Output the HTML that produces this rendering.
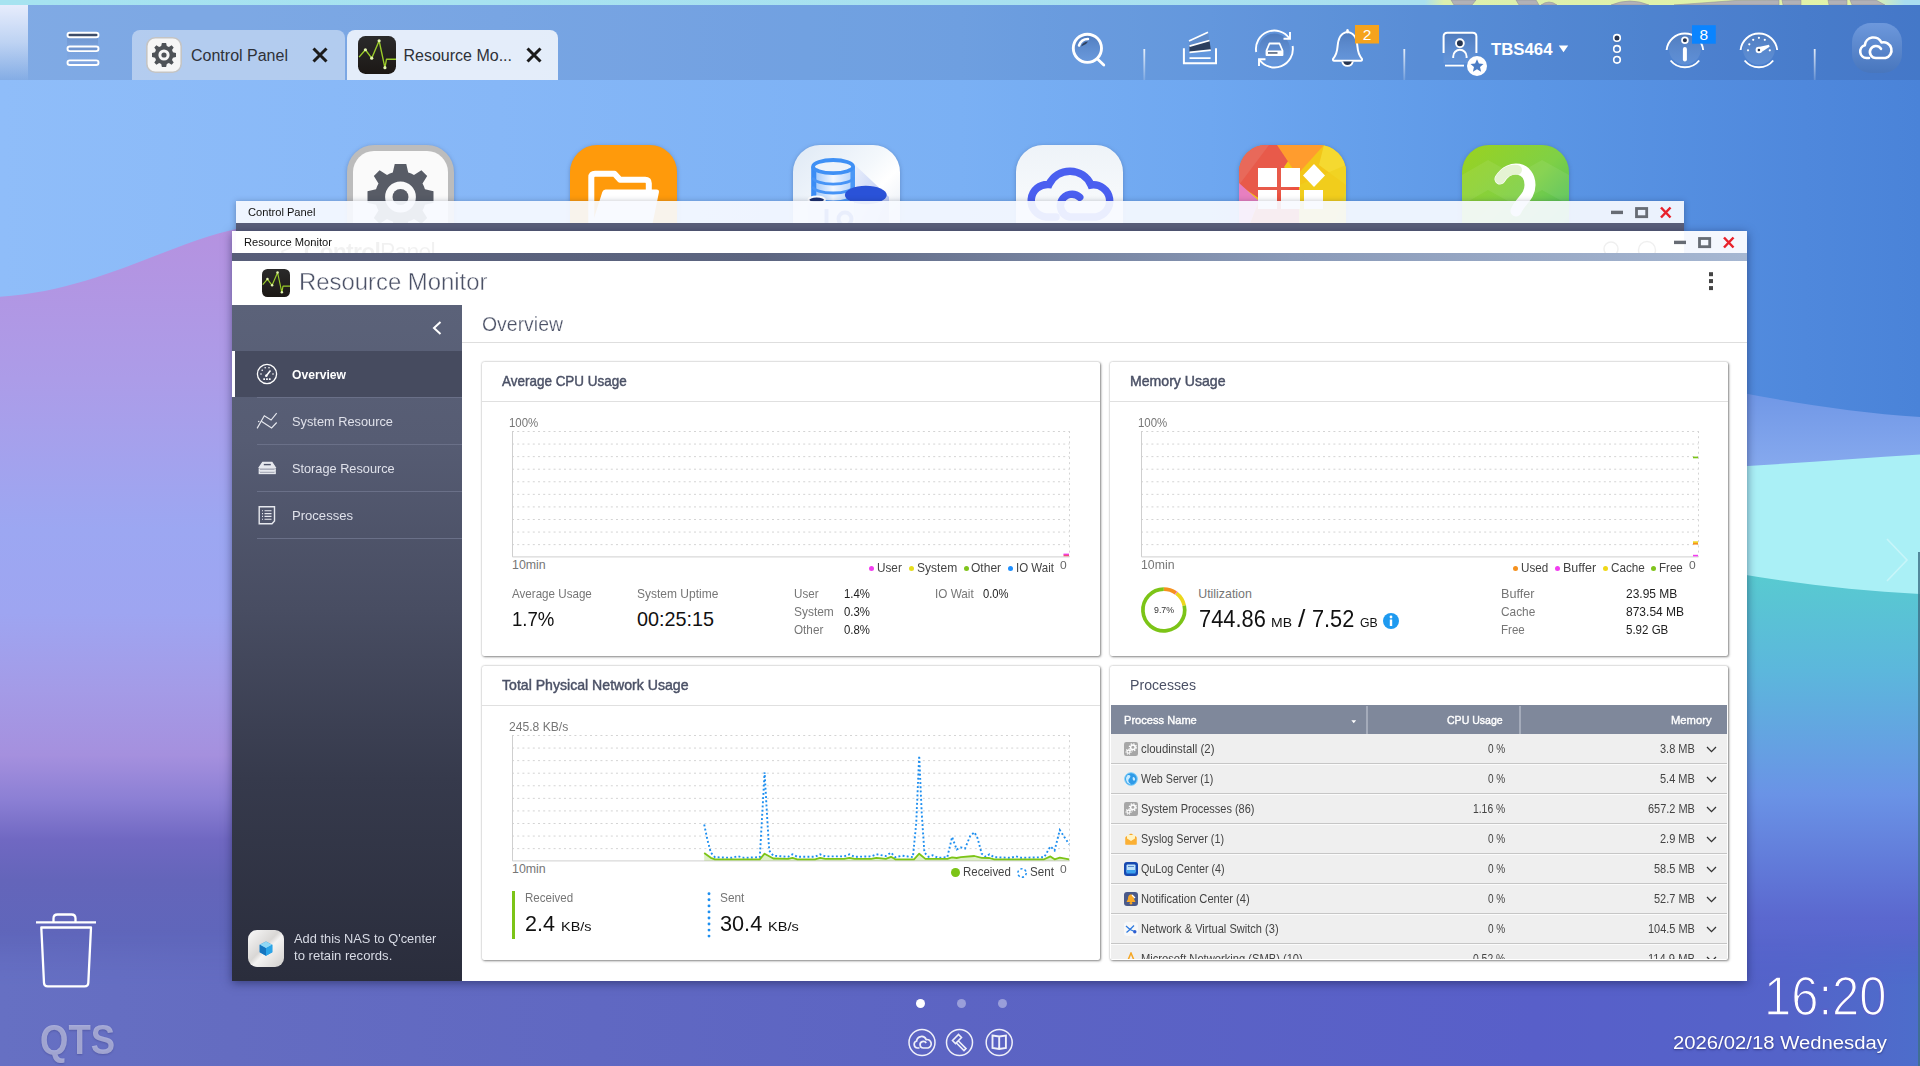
<!DOCTYPE html>
<html lang="en">
<head>
<meta charset="utf-8">
<title>QTS - Resource Monitor</title>
<style>
*{box-sizing:border-box;margin:0;padding:0}
html,body{width:1920px;height:1066px;overflow:hidden}
body{position:relative;font-family:"Liberation Sans",sans-serif;color:#333;background:#6c8fe0}
.abs{position:absolute}
#wall{position:absolute;left:0;top:0;width:1920px;height:1066px}
#topstrip{position:absolute;left:0;top:0;width:1920px;height:5px;background:#a9e1ef;overflow:hidden}
#topbar{position:absolute;left:0;top:5px;width:1920px;height:75px;background:rgba(30,50,90,0.13)}
.tab{position:absolute;top:25px;height:50px;border-radius:8px 8px 0 0}
.tab .ticon{position:absolute}
.tab .tlabel{position:absolute;left:59px;top:17px;font-size:16px;color:#2e3138;white-space:nowrap}
.tab .tclose{position:absolute;top:16px;width:18px;height:18px}
.dicon{position:absolute;top:145px;width:107px;height:107px;filter:drop-shadow(0 1px 2px rgba(40,60,110,0.35))}
.panel{position:absolute;background:#fff;border-radius:2px;border:1px solid transparent;box-shadow:0 0 2px rgba(0,0,0,0.3),1px 1px 2.500px rgba(0,0,0,0.42)}
.phs{position:absolute;left:-1px;right:-1px;height:1px;background:#e0e0e0}
.nav{position:absolute;left:0;width:230px;height:47px}
.navsep{position:absolute;left:25px;width:205px;height:1px;background:#6a7088}
.row{position:absolute;left:0;width:616px;height:30px;background:#efefef;border-bottom:1px solid #c9c9c9}
</style>
</head>
<body>
<svg id="wall" viewBox="0 0 1920 1066" preserveAspectRatio="none">
<defs>
<linearGradient id="gH" x1="0" y1="0" x2="1" y2="0">
<stop offset="0" stop-color="#8fbdf9"/><stop offset="0.26" stop-color="#86b7f7"/><stop offset="0.5" stop-color="#7ab0f4"/><stop offset="0.63" stop-color="#6ea7f0"/><stop offset="0.8" stop-color="#5b96e5"/><stop offset="0.94" stop-color="#4f88dc"/><stop offset="1" stop-color="#4a83d8"/>
</linearGradient>
<linearGradient id="gL" x1="0" y1="0" x2="0" y2="1">
<stop offset="0" stop-color="#b592e0"/><stop offset="0.18" stop-color="#ac9ce8"/><stop offset="0.36" stop-color="#9ca7f2"/><stop offset="0.46" stop-color="#9ea5f1"/><stop offset="0.551" stop-color="#a49be7"/><stop offset="0.629" stop-color="#a590de"/><stop offset="0.683" stop-color="#8b7fd4"/><stop offset="0.730" stop-color="#7068c2"/><stop offset="0.778" stop-color="#6465ba"/><stop offset="0.850" stop-color="#5f66bb"/><stop offset="1" stop-color="#6670c4"/>
</linearGradient>
<linearGradient id="gR" x1="0" y1="0" x2="0" y2="1">
<stop offset="0" stop-color="#58cbd0"/><stop offset="0.2" stop-color="#5cb7dc"/><stop offset="0.45" stop-color="#6a93e6"/><stop offset="0.7" stop-color="#5b68cf"/><stop offset="1" stop-color="#4a5cc4"/>
</linearGradient>
<linearGradient id="gB" x1="0" y1="0" x2="1" y2="0">
<stop offset="0" stop-color="#6670c3"/><stop offset="0.12" stop-color="#646cc1"/><stop offset="0.5" stop-color="#5c64c3"/><stop offset="0.8" stop-color="#585fc9"/><stop offset="0.93" stop-color="#5463c9"/><stop offset="1" stop-color="#4d6dcb"/>
</linearGradient>
<linearGradient id="gM" x1="0" y1="0" x2="0" y2="1"><stop offset="0" stop-color="#000"/><stop offset="0.4" stop-color="#fff"/><stop offset="1" stop-color="#fff"/></linearGradient>
<linearGradient id="gW" x1="0" y1="392" x2="0" y2="466" gradientUnits="userSpaceOnUse"><stop offset="0" stop-color="#7097e6"/><stop offset="1" stop-color="#86a9ee"/></linearGradient>
</defs>
<rect width="1920" height="1066" fill="url(#gH)"/>
<!-- left purple wave -->
<path d="M0,296.800 C97.200,290.300 162.300,245.300 240,228 L900,228 L900,1066 L0,1066 Z" fill="url(#gL)"/>
<!-- right waves -->
<path d="M1740,392.500 C1800,404 1860,413 1920,417 L1920,1066 L1740,1066 Z" fill="url(#gW)"/>
<path d="M1740,466.500 C1800,463 1860,458 1920,454.500 L1920,1066 L1740,1066 Z" fill="#aaf0f6"/>
<path d="M900,572 L1740,574 C1800,584 1860,591 1920,594 L1920,1066 L900,1066 Z" fill="url(#gR)"/>
<mask id="mB"><rect x="0" y="930" width="1920" height="136" fill="url(#gM)"/></mask>
<rect x="0" y="930" width="1920" height="136" fill="url(#gB)" mask="url(#mB)"/>
<rect x="1918" y="552" width="2" height="514" fill="#3d6f86" opacity="0.8"/>
</svg>
<div id="topstrip">
<svg width="1920" height="5" viewBox="0 0 1920 5" style="position:absolute;left:0;top:0">
<defs><linearGradient id="tsg" x1="0" y1="0" x2="1" y2="0"><stop offset="0" stop-color="#a6e3f0"/><stop offset="0.742" stop-color="#a9e0ef"/><stop offset="0.752" stop-color="#dcf0ae"/><stop offset="0.975" stop-color="#e2f3a8"/><stop offset="0.992" stop-color="#a9def0"/></linearGradient></defs>
<rect width="1920" height="5" fill="url(#tsg)"/>
<g fill="#b1b1b7" stroke="#8d8d93" stroke-width="0.500">
<path d="M1451,0 L1476,0 L1472,5 L1454,5 Z"/><path d="M1516,0 L1536,0 L1539,5 L1519,5 Z"/><path d="M1541,5 Q1549,-1 1557,5 Z"/><path d="M1611,5 Q1630,-3 1649,5 Z"/><path d="M1674,5 L1735,0.500 L1779,0 L1779,5 Z"/><path d="M1782,0 L1801,0 L1801,5 L1783,5 Z"/><path d="M1828,0 L1847,0 L1847,5 L1829,5 Z"/><path d="M1850,0 L1876,0 L1885,5 L1852,5 Z"/>
</g>
</svg>
</div>
<div id="topbar">
<div class="abs" style="left:0;top:0;width:28px;height:75px;background:linear-gradient(180deg,rgba(242,244,255,0.900) 0%,rgba(240,244,255,0.550) 50%,rgba(235,240,255,0.040) 100%)"></div>
<!-- hamburger -->
<svg class="abs" style="left:62px;top:21.500px" width="42" height="42" viewBox="0 0 42 42">
<defs><linearGradient id="hbg" x1="0" y1="0" x2="0" y2="1"><stop offset="0" stop-color="#5d7fb8" stop-opacity="0.9"/><stop offset="1" stop-color="#7da2dc" stop-opacity="0.2"/></linearGradient></defs>
<rect x="5" y="7" width="31" height="30" fill="url(#hbg)" opacity="0.55"/>
<rect x="5.500" y="5.700" width="31" height="4.600" rx="2.300" fill="#3d4c68" stroke="#fff" stroke-width="1.900"/>
<rect x="5.500" y="19.500" width="31" height="4.600" rx="2.300" fill="#6f94cf" stroke="#fff" stroke-width="1.900"/>
<rect x="5.500" y="33.400" width="31" height="4.600" rx="2.300" fill="#7ea3de" stroke="#fff" stroke-width="1.900"/>
</svg>
<!-- tab 1 -->
<div class="tab" style="left:132px;width:213px;background:rgba(255,255,255,0.42)">
<svg class="ticon" viewBox="0 0 36 36" style="left:14px;top:7px;width:36px;height:36px;overflow:visible">
<rect x="0.8" y="0.8" width="34.4" height="34.4" rx="8.5" fill="#f6f6f6" stroke="#c4c4c4" stroke-width="1.6"/>
<g transform="translate(18,18)" fill="#4e5257">
<path id="gear1" d="M-2.1,-12 L2.1,-12 L2.8,-8.9 A9.3,9.3 0 0 1 4.9,-8 L7.6,-9.7 L9.7,-7.6 L8,-4.9 A9.3,9.3 0 0 1 8.9,-2.8 L12,-2.1 L12,2.1 L8.9,2.8 A9.3,9.3 0 0 1 8,4.9 L9.7,7.6 L7.6,9.7 L4.9,8 A9.3,9.3 0 0 1 2.8,8.9 L2.1,12 L-2.1,12 L-2.8,8.9 A9.3,9.3 0 0 1 -4.9,8 L-7.6,9.7 L-9.7,7.6 L-8,4.9 A9.3,9.3 0 0 1 -8.9,2.8 L-12,2.1 L-12,-2.1 L-8.9,-2.8 A9.3,9.3 0 0 1 -8,-4.9 L-9.7,-7.6 L-7.6,-9.7 L-4.9,-8 A9.3,9.3 0 0 1 -2.8,-8.9 Z M0,-5.6 A5.6,5.6 0 1 0 0,5.6 A5.6,5.6 0 1 0 0,-5.6 Z" fill-rule="evenodd"/>
<circle r="2.6"/>
</g>
</svg>
<div class="tlabel">Control Panel</div>
<svg class="tclose" style="left:179px" viewBox="0 0 18 18"><path d="M2.5,2.5 L15.5,15.5 M15.5,2.5 L2.5,15.5" stroke="#1b1b1b" stroke-width="3" stroke-linecap="butt" fill="none"/></svg>
</div>
<!-- tab 2 -->
<div class="tab" style="left:347px;width:211px;background:rgba(255,255,255,0.8)">
<svg class="ticon" viewBox="0 0 36 36" style="left:11px;top:6px;width:38px;height:38px">
<defs><linearGradient id="rmg" x1="0" y1="0" x2="0" y2="1"><stop offset="0" stop-color="#2a2a2a"/><stop offset="1" stop-color="#1c1815"/></linearGradient></defs>
<rect x="0" y="0" width="36" height="36" rx="7" fill="url(#rmg)"/>
<path d="M1,20 L7,13 L13,21 L20,4.5 L25.5,30 L27,22 L36,22" fill="none" stroke="#9acb2a" stroke-width="1.3" stroke-linejoin="round"/>
<circle cx="7" cy="13" r="1.5" fill="#e4f5b0"/><circle cx="13" cy="21" r="1.5" fill="#e4f5b0"/><circle cx="20" cy="4.5" r="1.5" fill="#e4f5b0"/><circle cx="25.5" cy="30" r="1.5" fill="#e4f5b0"/>
</svg>
<div class="tlabel" style="left:56.500px">Resource Mo...</div>
<svg class="tclose" style="left:178px" viewBox="0 0 18 18"><path d="M2.5,2.5 L15.5,15.5 M15.5,2.5 L2.5,15.5" stroke="#1b1b1b" stroke-width="3" stroke-linecap="butt" fill="none"/></svg>
</div>
<svg class="abs" style="left:1040px;top:0" width="880" height="75" viewBox="1040 5 880 75">
<defs>
<linearGradient id="sepg" x1="0" y1="0" x2="0" y2="1"><stop offset="0" stop-color="#fff" stop-opacity="0.85"/><stop offset="1" stop-color="#fff" stop-opacity="0.15"/></linearGradient>
<linearGradient id="dk" x1="0" y1="0" x2="0" y2="1"><stop offset="0" stop-color="#4f7bbd"/><stop offset="1" stop-color="#6a98da" stop-opacity="0.6"/></linearGradient>
<linearGradient id="cbg" x1="0" y1="0" x2="0" y2="1"><stop offset="0" stop-color="#6d98dc"/><stop offset="1" stop-color="#4876bd"/></linearGradient>
</defs>
<!-- search -->
<circle cx="1087.4" cy="48.3" r="14.1" fill="url(#dk)" stroke="#fff" stroke-width="2.9"/>
<path d="M1079,45.500 A9.500,9.500 0 0 1 1088,39" fill="none" stroke="#fff" stroke-width="2.500" stroke-linecap="round"/>
<path d="M1081,46.5 A8,8 0 0 1 1088,41.5 L1086,44 Z" fill="#2f415f"/>
<path d="M1097.5,59 L1103.8,65" stroke="#fff" stroke-width="2.8" stroke-linecap="round"/>
<!-- sep -->
<rect x="1143.4" y="49" width="1.8" height="31" fill="url(#sepg)"/>
<rect x="1403.4" y="49" width="1.8" height="31" fill="url(#sepg)"/>
<rect x="1813.8" y="49" width="1.8" height="31" fill="url(#sepg)"/>
<!-- tray -->
<path d="M1189,41 L1208,32.3 L1210.8,50.5 L1189.5,52.5 Z" fill="#5f8ccb"/>
<path d="M1189.5,46.2 L1209.5,40.5 L1210.8,50 L1189.5,52 Z" fill="#2c3f5e"/>
<path d="M1189,41 L1208,32.3 M1189.5,46.2 L1209.5,40.5 M1189.5,52.3 L1210.8,50.2 M1189.5,58.2 L1210.6,58.2" stroke="#fff" stroke-width="1.8" fill="none"/>
<path d="M1183.9,48.3 L1183.9,63.2 L1216,63.2 L1216,48.3" stroke="#fff" stroke-width="2" fill="none"/>
<!-- sync -->
<circle cx="1274.4" cy="48.9" r="15.5" fill="url(#dk)"/>
<path d="M1256.2,52 A18.4,18.4 0 0 1 1289.5,38.5" fill="none" stroke="#fff" stroke-width="1.9"/>
<path d="M1283.5,38.8 L1290,38.8 L1290,32" fill="none" stroke="#fff" stroke-width="1.9"/>
<path d="M1292.6,46 A18.4,18.4 0 0 1 1259.3,59.5" fill="none" stroke="#fff" stroke-width="1.9"/>
<path d="M1265.5,59.2 L1259,59.2 L1259,66" fill="none" stroke="#fff" stroke-width="1.9"/>
<path d="M1269.5,43.5 L1279.5,43.5 L1282.5,50.5 L1282.5,55 L1266.5,55 L1266.5,50.5 Z" fill="none" stroke="#fff" stroke-width="1.8" stroke-linejoin="round"/>
<rect x="1266.5" y="50.5" width="16" height="4.5" fill="#fff"/>
<rect x="1268" y="52.3" width="9.5" height="1.3" fill="#2c3f5e"/>
<!-- bell -->
<path d="M1347.5,32 C1339.5,33 1338,40 1337.5,47 C1337,54 1334.5,57 1333.2,58.6 C1332.6,59.6 1333,60.8 1334.2,60.8 L1360.8,60.8 C1362,60.8 1362.4,59.6 1361.8,58.6 C1360.5,57 1358,54 1357.5,47 C1357,40 1355.500,33 1347.5,32 Z" fill="url(#dk)" stroke="#fff" stroke-width="2" stroke-linejoin="round"/>
<path d="M1342.2,61.5 A5.4,5.4 0 0 0 1352.800,61.5" fill="#26344f" stroke="#fff" stroke-width="1.8"/>
<path d="M1347.5,30.3 L1347.5,32" stroke="#fff" stroke-width="2.4" stroke-linecap="round"/>
<rect x="1355" y="25" width="24" height="18.5" fill="#f5a31d"/>
<text x="1367" y="39.6" font-family="Liberation Sans, sans-serif" font-size="15.500" fill="#fff" text-anchor="middle">2</text>
<!-- user -->
<rect x="1443.5" y="33" width="33" height="30" fill="url(#dk)"/>
<path d="M1443.6,53 L1443.6,36.5 Q1443.6,32.700 1447.4,32.700 L1472.6,32.700 Q1476.4,32.700 1476.4,36.500 L1476.4,53" fill="none" stroke="#fff" stroke-width="2"/>
<path d="M1445,65.600 L1464,65.600" stroke="#fff" stroke-width="1.8"/>
<circle cx="1459.900" cy="43.2" r="3.9" fill="#26344f" stroke="#fff" stroke-width="1.9"/>
<path d="M1453.2,58 L1453.2,56.5 A6.7,6.7 0 0 1 1466.600,56.500 L1466.600,58" fill="none" stroke="#fff" stroke-width="1.9"/>
<circle cx="1477" cy="66" r="10" fill="#fff"/>
<path d="M1477,59.300 L1478.900,63.600 L1483.500,64 L1480,67.100 L1481.100,71.700 L1477,69.300 L1472.900,71.700 L1474,67.100 L1470.500,64 L1475.100,63.600 Z" fill="#4b7cc4"/>
<text x="1491" y="54.800" font-family="Liberation Sans, sans-serif" font-weight="bold" font-size="17.3" fill="#fff" textLength="61.500" lengthAdjust="spacingAndGlyphs">TBS464</text>
<path d="M1558.800,45.500 L1568.200,45.500 L1563.500,52.200 Z" fill="#fff"/>
<!-- dots -->
<rect x="1613.500" y="36" width="7" height="26" fill="#4b77b8" opacity="0.5"/>
<circle cx="1617" cy="37.900" r="3.300" fill="#26344f" stroke="#fff" stroke-width="1.600"/>
<circle cx="1617" cy="48.900" r="3.300" fill="none" stroke="#fff" stroke-width="1.600"/>
<circle cx="1617" cy="59.800" r="3.300" fill="none" stroke="#fff" stroke-width="1.600"/>
<!-- info -->
<circle cx="1684.900" cy="48.800" r="16" fill="url(#dk)"/>
<path d="M1666.600,50 A18.400,18.400 0 0 1 1703.200,50" fill="none" stroke="#fff" stroke-width="1.900"/>
<path d="M1670.600,60.500 A18.400,18.400 0 0 0 1699.200,60.500" fill="none" stroke="#fff" stroke-width="1.900"/>
<circle cx="1684.900" cy="40.200" r="2.900" fill="#26344f" stroke="#fff" stroke-width="1.700"/>
<path d="M1684.900,49 L1684.900,59.500" stroke="#fff" stroke-width="4" stroke-linecap="round"/>
<rect x="1692" y="25.200" width="23.800" height="18.500" fill="#0a84ff"/>
<text x="1703.900" y="39.800" font-family="Liberation Sans, sans-serif" font-size="15.500" fill="#fff" text-anchor="middle">8</text>
<!-- gauge -->
<circle cx="1758.900" cy="48.800" r="16" fill="url(#dk)"/>
<path d="M1740.600,50 A18.400,18.400 0 0 1 1777.200,50" fill="none" stroke="#fff" stroke-width="1.900"/>
<path d="M1744.600,60.500 A18.400,18.400 0 0 0 1773.200,60.500" fill="none" stroke="#fff" stroke-width="1.900"/>
<g fill="#fff"><circle cx="1748" cy="50.300" r="1.100"/><circle cx="1749.300" cy="44.300" r="1.100"/><circle cx="1753.200" cy="39.800" r="1.100"/><circle cx="1758.900" cy="37.800" r="1.100"/><circle cx="1764.800" cy="39.800" r="1.100"/><circle cx="1769.800" cy="50.300" r="1.100"/></g>
<path d="M1756.500,47.500 L1769,44.800 L1769.600,46.800 L1760,53 Z" fill="#fff"/>
<circle cx="1758.900" cy="50" r="3.300" fill="#fff"/><circle cx="1758.900" cy="50" r="1.300" fill="#26344f"/>
<!-- cloud btn -->
<rect x="1852" y="23" width="50" height="50" rx="19" fill="url(#cbg)"/>
<g fill="none" stroke="#fff" stroke-width="2.600" stroke-linecap="round" stroke-linejoin="round">
<path d="M1869,58 L1866.500,58 A6.500,6.500 0 0 1 1864.800,45.300 A8.800,8.800 0 0 1 1881.500,42.500 A7.800,7.800 0 0 1 1885.500,58 L1876,58 A6,6 0 1 1 1881,48.800"/>
</g>
</svg>

</div>
<div id="desk">
<!-- control panel -->
<svg class="dicon" style="left:347px" viewBox="0 0 107 107">
<rect width="107" height="107" rx="27" fill="#bcbcbc"/>
<rect x="6" y="6" width="95" height="95" rx="21" fill="#fafafa"/>
<g transform="translate(53.5,52) scale(2.75)" fill="#585c66"><use href="#gear1"/><circle r="2.9"/></g>
</svg>
<!-- file station -->
<svg class="dicon" style="left:570px" viewBox="0 0 107 107">
<rect width="107" height="107" rx="27" fill="#ff9a0b"/>
<path d="M21.300,86 L21.300,32.500 Q21.300,28.800 25,28.800 L44.500,28.800 L50,34.700 L75.200,34.700 Q78.800,34.700 78.800,38.300 L78.800,46" fill="none" stroke="#fff" stroke-width="6" stroke-linejoin="round"/>
<path d="M35.500,44.400 L86.500,44.400 Q89.500,44.400 88.900,47.400 L81,86 L20,86 L32.300,47 Q33.100,44.400 35.500,44.400 Z" fill="#fff"/>
</svg>
<!-- storage -->
<svg class="dicon" style="left:793px" viewBox="0 0 107 107">
<defs><linearGradient id="stg" x1="0" y1="0" x2="1" y2="1"><stop offset="0" stop-color="#dfe9f5"/><stop offset="0.450" stop-color="#f4f8fc"/><stop offset="0.600" stop-color="#ffffff"/><stop offset="1" stop-color="#dbe4f1"/></linearGradient>
<linearGradient id="stc" x1="0" y1="0" x2="1" y2="0"><stop offset="0" stop-color="#3a8cf5"/><stop offset="0.100" stop-color="#3a8cf5"/><stop offset="0.130" stop-color="#a9cdfb"/><stop offset="0.500" stop-color="#f2f7ff"/><stop offset="0.880" stop-color="#bcd8fc"/><stop offset="0.910" stop-color="#4a97f6"/><stop offset="1" stop-color="#4a97f6"/></linearGradient>
<linearGradient id="stw" x1="0" y1="0" x2="1" y2="1"><stop offset="0" stop-color="#e6ecfb"/><stop offset="0.600" stop-color="#b9c8f3"/><stop offset="1" stop-color="#9fb2ee"/></linearGradient></defs>
<rect width="107" height="107" rx="27" fill="url(#stg)"/>
<path d="M62,20 L96,52 L96,107 L62,107 Z" fill="url(#stw)" opacity="0.850"/>
<rect x="18.200" y="21.600" width="43.800" height="50" fill="url(#stc)"/>
<ellipse cx="40.100" cy="21.600" rx="20" ry="6.600" fill="#eef3fa" stroke="#3f90f5" stroke-width="3.800"/>
<path d="M20,32.500 A20,6.600 0 0 0 60.200,32.500 M20,41.400 A20,6.600 0 0 0 60.200,41.400 M20,50.200 A20,6.600 0 0 0 60.200,50.200" fill="none" stroke="#4794f6" stroke-width="2.900"/>
<ellipse cx="72.800" cy="50" rx="20.900" ry="9.200" fill="#2a52d8"/>
<rect x="14.800" y="56" width="47" height="51" rx="4" fill="#e6ecf6"/>
<ellipse cx="23.700" cy="54.800" rx="8.300" ry="3.200" fill="#1c2f6e" stroke="#fff" stroke-width="2"/>
<rect x="31.500" y="64" width="4" height="20" fill="#3a62d8"/><circle cx="52" cy="74" r="6.500" fill="none" stroke="#3a62d8" stroke-width="4"/>
</svg>
<!-- myqnapcloud -->
<svg class="dicon" style="left:1016px" viewBox="0 0 107 107">
<defs><linearGradient id="mcg" x1="0" y1="0" x2="0" y2="1"><stop offset="0" stop-color="#eef3f8"/><stop offset="1" stop-color="#ffffff"/></linearGradient></defs>
<rect width="107" height="107" rx="27" fill="url(#mcg)"/>
<path d="M63.700,52.200 A11.500,11.500 0 1 0 53.700,72 L80,72 A15.500,15.500 0 0 0 75,40 A23,23 0 0 0 33,39.500 A16,16 0 0 0 30,72 L40,72" fill="none" stroke="#4a5ff0" stroke-width="7.500" stroke-linecap="round"/>
</svg>
<!-- app center -->
<svg class="dicon" style="left:1239px" viewBox="0 0 107 107">
<defs><clipPath id="acc"><rect width="107" height="107" rx="27"/></clipPath></defs>
<g clip-path="url(#acc)">
<rect width="107" height="107" fill="#f3c618"/>
<path d="M0,0 L60,0 L45,22 L60,40 L30,60 L0,40 Z" fill="#e85a4a"/>
<path d="M0,0 L30,0 L0,40 Z" fill="#e8695a"/>
<path d="M45,0 L85,0 L58,30 L38,0 Z" fill="#ff9c2e"/>
<path d="M85,0 L107,0 L107,40 L80,20 Z" fill="#f5d930"/>
<path d="M0,38 L20,56 L0,107 Z" fill="#e77fc0"/>
<path d="M107,45 L107,107 L85,107 Z" fill="#c8d84a"/>
<path d="M20,56 L60,40 L60,107 L0,107 Z" fill="#ec5240"/>
<path d="M60,40 L107,20 L107,107 L60,107 Z" fill="#f0d01e" opacity="0.7"/>
<rect x="19" y="23" width="19" height="19" fill="#fff"/><rect x="42" y="23" width="19" height="19" fill="#fff"/>
<rect x="19" y="45" width="19" height="19" fill="#fff"/><rect x="42" y="45" width="19" height="19" fill="#fff"/><rect x="65" y="45" width="19" height="19" fill="#fff"/>
<path d="M75,19 L86,30.500 L75,42 L64,30.500 Z" fill="#fff"/>
</g>
</svg>
<!-- help -->
<svg class="dicon" style="left:1462px" viewBox="0 0 107 107">
<defs><linearGradient id="hpg" x1="0" y1="0" x2="1" y2="1"><stop offset="0" stop-color="#9bd21f"/><stop offset="0.5" stop-color="#7fd046"/><stop offset="1" stop-color="#35b765"/></linearGradient></defs>
<rect width="107" height="107" rx="27" fill="url(#hpg)"/>
<path d="M0,30 L26,15 L53,30 L80,15 L107,30 L107,60 L80,45 L53,60 L26,45 L0,60 Z" fill="#fff" opacity="0.070"/>
<path d="M38,34 C48,18 68,22 68,40 C68,52 58,56 54,66" fill="none" stroke="#fff" stroke-width="11" stroke-linecap="round"/>
<path d="M38,34 C42,27 49,24 55,25" fill="none" stroke="#dff0c8" stroke-width="10" stroke-linecap="round" opacity="0.800"/>
</svg>
</div>
<div id="cpwin" class="abs" style="left:236px;top:201px;width:1448px;height:30px;box-shadow:0 1px 6px rgba(20,30,60,0.35)">
<div class="abs" style="left:0;top:0;width:1448px;height:22px;background:rgba(247,250,255,0.925)"></div>
<div class="abs" style="left:0;top:22px;width:1448px;height:8px;background:#595e79"></div>
<div class="abs" style="left:0;top:30px;width:1448px;height:300px;background:#fff"></div>
<div style="position:absolute;top:6.00px;font-size:11.40px;line-height:11.40px;color:#111;white-space:nowrap;left:11.60px;transform:scaleX(0.9764);transform-origin:0 0;">Control Panel</div>
<svg class="abs" style="left:1370px;top:0" width="78" height="22" viewBox="0 0 78 22">
<rect x="5" y="9.700" width="12" height="3.400" fill="#676c74"/>
<rect x="30.500" y="7.500" width="10.200" height="8.200" fill="none" stroke="#676c74" stroke-width="2.800"/>
<path d="M55,6.500 L64.500,16.500 M64.500,6.500 L55,16.500" stroke="#e8212b" stroke-width="2.500" fill="none"/>
</svg>
</div>
<div id="rmwin" class="abs" style="left:232px;top:231px;width:1515px;height:750px;box-shadow:0 2px 9px rgba(15,20,60,0.5)">
<div class="abs" style="left:0;top:0;width:1515px;height:22px;background:rgba(255,255,255,0.965)"></div>
<div class="abs" style="left:1452px;top:0;width:63px;height:22px;background:rgba(240,245,253,0.6)"></div>
<div class="abs" style="left:0;top:0;width:1515px;height:22px;overflow:hidden"><div class="abs" style="left:48px;top:9px;font-size:23px;line-height:24px;color:#000;opacity:0.050;white-space:nowrap;letter-spacing:-0.800px">&lt; &nbsp;<b>Control</b>Panel</div><svg class="abs" style="left:1368px;top:8px;opacity:0.06" width="60" height="16" viewBox="0 0 60 16"><circle cx="11" cy="10" r="7" fill="none" stroke="#000" stroke-width="1.500"/><circle cx="47" cy="11" r="8.500" fill="none" stroke="#000" stroke-width="1.500"/></svg></div>
<div style="position:absolute;top:6.00px;font-size:11.40px;line-height:11.40px;color:#111;white-space:nowrap;left:11.70px;transform:scaleX(0.9788);transform-origin:0 0;">Resource Monitor</div>
<svg class="abs" style="left:1437px;top:0" width="78" height="22" viewBox="0 0 78 22">
<rect x="5" y="9.700" width="12" height="3.400" fill="#676c74"/>
<rect x="30.500" y="7.500" width="10.200" height="8.200" fill="none" stroke="#676c74" stroke-width="2.800"/>
<path d="M55,6.500 L64.500,16.500 M64.500,6.500 L55,16.500" stroke="#e8212b" stroke-width="2.500" fill="none"/>
</svg>
<div class="abs" style="left:0;top:22px;width:1515px;height:8px;background:linear-gradient(90deg,#575d78 0%,#5c6580 35%,#8a9ab8 70%,#a6b7d2 100%)"></div>
<div class="abs" style="left:0;top:30px;width:1515px;height:44px;background:#fff"></div>
<svg class="abs" style="left:30px;top:38px" width="28" height="28" viewBox="0 0 36 36">
<rect width="36" height="36" rx="7" fill="url(#rmg)"/>
<path d="M1,20 L7,13 L13,21 L20,4.500 L25.500,30 L27,22 L36,22" fill="none" stroke="#9acb2a" stroke-width="1.500" stroke-linejoin="round"/>
<circle cx="7" cy="13" r="1.600" fill="#e4f5b0"/><circle cx="13" cy="21" r="1.600" fill="#e4f5b0"/><circle cx="20" cy="4.500" r="1.600" fill="#e4f5b0"/><circle cx="25.500" cy="30" r="1.600" fill="#e4f5b0"/>
</svg>
<div style="position:absolute;top:40.00px;font-size:23.50px;line-height:23.50px;color:#4b5166;white-space:nowrap;left:66.90px;transform:scaleX(1.0163);transform-origin:0 0;-webkit-text-stroke:0.400px #fff;">Resource Monitor</div>
<svg class="abs" style="left:1476px;top:40px" width="6" height="20" viewBox="0 0 6 20"><rect x="1" y="1.200" width="4" height="4" fill="#444"/><rect x="1" y="8.100" width="4" height="4" fill="#444"/><rect x="1" y="15.100" width="4" height="4" fill="#444"/></svg>
<div class="abs" style="left:0;top:74px;width:230px;height:676px;background:linear-gradient(180deg,#5b6279 0%,#565c73 20%,#484d62 45%,#363a4c 70%,#2a2d3c 100%)">
<svg class="abs" style="left:199px;top:15px" width="12" height="16" viewBox="0 0 12 16"><path d="M9.500,2 L3,8 L9.500,14" fill="none" stroke="#fff" stroke-width="2"/></svg>
<div class="nav" style="top:46px;height:46px;background:#464b5f"></div><div class="abs" style="left:0;top:46px;width:3px;height:46px;background:#fff"></div>
<div class="navsep" style="top:92.0px"></div>
<div class="navsep" style="top:139.0px"></div>
<div class="navsep" style="top:186.0px"></div>
<div class="navsep" style="top:233.0px"></div>
<svg class="abs" style="left:24px;top:58px" width="22" height="22" viewBox="0 0 22 22" fill="none" stroke="#fff" stroke-width="1.300">
<circle cx="11" cy="11" r="9.600"/><path d="M10.500,12.500 L14.500,7.500" stroke-width="1.600"/><circle cx="10.300" cy="12.800" r="1.300" fill="#fff" stroke="none"/>
<g stroke="none" fill="#fff"><rect x="7.300" y="15.300" width="1.700" height="1.700"/><rect x="10.100" y="15.300" width="1.700" height="1.700"/><rect x="12.900" y="15.300" width="1.700" height="1.700"/>
<circle cx="5" cy="11" r="0.800"/><circle cx="6.200" cy="7.200" r="0.800"/><circle cx="9.200" cy="4.800" r="0.800"/><circle cx="13" cy="4.800" r="0.800"/><circle cx="17" cy="11" r="0.800"/></g></svg>
<svg class="abs" style="left:24px;top:105px" width="22" height="22" viewBox="0 0 22 22" fill="none" stroke="#e6e8ee" stroke-width="1.150">
<path d="M1.100,18.400 L8.300,5.800 L15.100,10 L20.700,3.200"/><path d="M5.300,11.200 L15.600,17.900 L20.700,12.500"/><circle cx="2.700" cy="11.500" r="0.800" fill="#e6e8ee" stroke="none"/></svg>
<svg class="abs" style="left:24px;top:152px" width="22" height="22" viewBox="0 0 22 22" fill="none" stroke="#e6e8ee" stroke-width="1.300">
<path d="M6.700,5.300 L15.900,5.300 L19.200,10.300 L3.300,10.300 Z" fill="#e6e8ee"/><rect x="7.800" y="6.900" width="7" height="1.400" fill="#4f556b" stroke="none"/>
<rect x="3.300" y="11.900" width="15.900" height="1.700" fill="none"/><rect x="3.300" y="14.800" width="15.900" height="1.700" fill="none"/></svg>
<svg class="abs" style="left:24px;top:199px" width="22" height="22" viewBox="0 0 22 22" fill="none" stroke="#e6e8ee" stroke-width="1.400">
<path d="M3.200,2.700 L18.500,2.700 L18.500,17 L16,19.700 L3.200,19.700 Z"/><g stroke-width="1.100"><path d="M8.500,6.800 L15.500,6.800 M8.500,9.600 L15.500,9.600 M8.500,12.400 L15.500,12.400 M8.500,15.200 L15.500,15.200"/><path d="M6,6.800 L7,6.800 M6,9.600 L7,9.600 M6,12.400 L7,12.400 M6,15.200 L7,15.200"/></g></svg>
<div style="position:absolute;top:63.00px;font-size:13.40px;line-height:13.40px;color:#fff;white-space:nowrap;font-weight:bold;left:59.50px;transform:scaleX(0.9066);transform-origin:0 0;">Overview</div>
<div style="position:absolute;top:110.00px;font-size:13.40px;line-height:13.40px;color:#dfe1ea;white-space:nowrap;left:59.50px;transform:scaleX(0.9556);transform-origin:0 0;">System Resource</div>
<div style="position:absolute;top:157.00px;font-size:13.40px;line-height:13.40px;color:#dfe1ea;white-space:nowrap;left:59.50px;transform:scaleX(0.9515);transform-origin:0 0;">Storage Resource</div>
<div style="position:absolute;top:204.00px;font-size:13.40px;line-height:13.40px;color:#dfe1ea;white-space:nowrap;left:59.50px;transform:scaleX(0.9758);transform-origin:0 0;">Processes</div>
<svg class="abs" style="left:16px;top:624.500px" width="36" height="37" viewBox="0 0 36 37">
<defs><linearGradient id="qcg" x1="0" y1="0" x2="1" y2="1"><stop offset="0" stop-color="#fafafa"/><stop offset="0.450" stop-color="#d9d7d5"/><stop offset="0.550" stop-color="#f4f3f2"/><stop offset="1" stop-color="#d0cecc"/></linearGradient></defs>
<rect width="36" height="37" rx="9" fill="url(#qcg)"/>
<path d="M18,11.500 L24.300,14.800 L24.300,22.300 L18,25.800 L11.700,22.300 L11.700,14.800 Z" fill="#1f8fd8"/>
<path d="M18,11.500 L24.300,14.800 L18,18.200 L11.700,14.800 Z" fill="#8fd8f5"/><path d="M18,18.200 L24.300,14.800 L24.300,22.300 L18,25.800 Z" fill="#2aa5e8"/><path d="M18,18.200 L11.700,14.800 L11.700,22.300 L18,25.800 Z" fill="#1576c0"/></svg>
<div style="position:absolute;top:628.00px;font-size:12.60px;line-height:12.60px;color:#d8dbe5;white-space:nowrap;left:61.60px;transform:scaleX(1.0200);transform-origin:0 0;">Add this NAS to Q'center</div>
<div style="position:absolute;top:645.00px;font-size:12.60px;line-height:12.60px;color:#d8dbe5;white-space:nowrap;left:61.60px;transform:scaleX(1.0402);transform-origin:0 0;">to retain records.</div>
</div>
<div class="abs" style="left:230px;top:74px;width:1285px;height:676px;background:#fff"></div>
<div style="position:absolute;top:84.00px;font-size:19.80px;line-height:19.80px;color:#4b5166;white-space:nowrap;left:249.80px;transform:scaleX(0.9824);transform-origin:0 0;-webkit-text-stroke:0.250px #fff;">Overview</div>
<div class="abs" style="left:230px;top:111px;width:1285px;height:1px;background:#dedede"></div>
<div class="panel" style="left:250px;top:131px;width:618px;height:294px;"><div class="phs" style="top:38px"></div></div>
<div style="position:absolute;top:143.00px;font-size:14.30px;line-height:14.30px;color:#4b5166;white-space:nowrap;left:270.00px;transform:scaleX(0.9415);transform-origin:0 0;-webkit-text-stroke:0.450px #4b5166;">Average CPU Usage</div>
<div style="position:absolute;top:186.00px;font-size:12.40px;line-height:12.40px;color:#767676;white-space:nowrap;left:277.00px;transform:scaleX(0.9242);transform-origin:0 0;">100%</div>
<svg class="abs" style="left:276.0px;top:196.0px;overflow:visible" width="570" height="140" viewBox="0 0 570 140"><g transform="translate(4,4)"><path d="M0,0.50 L557.5,0.50" stroke="#d4d4d4" stroke-width="1" stroke-dasharray="2,3.200" fill="none"/><path d="M0,13.07 L557.5,13.07" stroke="#d4d4d4" stroke-width="1" stroke-dasharray="2,3.200" fill="none"/><path d="M0,25.64 L557.5,25.64" stroke="#d4d4d4" stroke-width="1" stroke-dasharray="2,3.200" fill="none"/><path d="M0,38.21 L557.5,38.21" stroke="#d4d4d4" stroke-width="1" stroke-dasharray="2,3.200" fill="none"/><path d="M0,50.78 L557.5,50.78" stroke="#d4d4d4" stroke-width="1" stroke-dasharray="2,3.200" fill="none"/><path d="M0,63.35 L557.5,63.35" stroke="#d4d4d4" stroke-width="1" stroke-dasharray="2,3.200" fill="none"/><path d="M0,75.92 L557.5,75.92" stroke="#d4d4d4" stroke-width="1" stroke-dasharray="2,3.200" fill="none"/><path d="M0,88.49 L557.5,88.49" stroke="#d4d4d4" stroke-width="1" stroke-dasharray="2,3.200" fill="none"/><path d="M0,101.06 L557.5,101.06" stroke="#d4d4d4" stroke-width="1" stroke-dasharray="2,3.200" fill="none"/><path d="M0,113.63 L557.5,113.63" stroke="#d4d4d4" stroke-width="1" stroke-dasharray="2,3.200" fill="none"/><path d="M557.5,0 L557.5,125.7" stroke="#d4d4d4" stroke-width="1" stroke-dasharray="2,3.200" fill="none"/><path d="M0.500,0 L0.500,125.9 L557.5,125.9" stroke="#cfcfcf" stroke-width="1" fill="none"/><rect x="551.500" y="122.600" width="5.500" height="1.400" fill="#f23df0"/><rect x="551.500" y="123.800" width="5.500" height="1.500" fill="#f0507a"/></g></svg>
<div style="position:absolute;top:328.00px;font-size:12.40px;line-height:12.40px;color:#767676;white-space:nowrap;left:280.00px;">10min</div>
<div class="abs" style="left:636.7px;top:334.7px;width:5.2px;height:5.2px;border-radius:50%;background:#f23df0"></div>
<div style="position:absolute;top:331.00px;font-size:12.40px;line-height:12.40px;color:#444;white-space:nowrap;left:645.00px;transform:scaleX(0.9476);transform-origin:0 0;">User</div>
<div class="abs" style="left:676.7px;top:334.7px;width:5.2px;height:5.2px;border-radius:50%;background:#e6de1e"></div>
<div style="position:absolute;top:331.00px;font-size:12.40px;line-height:12.40px;color:#444;white-space:nowrap;left:684.50px;transform:scaleX(0.9731);transform-origin:0 0;">System</div>
<div class="abs" style="left:731.7px;top:334.7px;width:5.2px;height:5.2px;border-radius:50%;background:#80c41c"></div>
<div style="position:absolute;top:331.00px;font-size:12.40px;line-height:12.40px;color:#444;white-space:nowrap;left:739.20px;transform:scaleX(0.9710);transform-origin:0 0;">Other</div>
<div class="abs" style="left:775.7px;top:334.7px;width:5.2px;height:5.2px;border-radius:50%;background:#1e8fff"></div>
<div style="position:absolute;top:331.00px;font-size:12.40px;line-height:12.40px;color:#444;white-space:nowrap;left:783.80px;transform:scaleX(0.9300);transform-origin:0 0;">IO Wait</div>
<div style="position:absolute;top:329.00px;font-size:11.00px;line-height:11.00px;color:#666;white-space:nowrap;left:828.00px;transform:scaleX(1.0939);transform-origin:0 0;">0</div>
<div style="position:absolute;top:357.00px;font-size:12.40px;line-height:12.40px;color:#767676;white-space:nowrap;left:280.00px;transform:scaleX(0.9368);transform-origin:0 0;">Average Usage</div>
<div style="position:absolute;top:379.00px;font-size:19.80px;line-height:19.80px;color:#111;white-space:nowrap;left:280.30px;transform:scaleX(0.9403);transform-origin:0 0;">1.7%</div>
<div style="position:absolute;top:357.00px;font-size:12.40px;line-height:12.40px;color:#767676;white-space:nowrap;left:404.70px;transform:scaleX(0.9679);transform-origin:0 0;">System Uptime</div>
<div style="position:absolute;top:379.00px;font-size:19.80px;line-height:19.80px;color:#111;white-space:nowrap;left:405.00px;">00:25:15</div>
<div style="position:absolute;top:357.00px;font-size:12.40px;line-height:12.40px;color:#767676;white-space:nowrap;left:562.00px;transform:scaleX(0.9361);transform-origin:0 0;">User</div>
<div style="position:absolute;top:357.00px;font-size:12.40px;line-height:12.40px;color:#1e1e1e;white-space:nowrap;left:611.70px;transform:scaleX(0.9204);transform-origin:0 0;">1.4%</div>
<div style="position:absolute;top:375.00px;font-size:12.40px;line-height:12.40px;color:#767676;white-space:nowrap;left:562.00px;transform:scaleX(0.9634);transform-origin:0 0;">System</div>
<div style="position:absolute;top:375.00px;font-size:12.40px;line-height:12.40px;color:#1e1e1e;white-space:nowrap;left:611.70px;transform:scaleX(0.9204);transform-origin:0 0;">0.3%</div>
<div style="position:absolute;top:393.00px;font-size:12.40px;line-height:12.40px;color:#767676;white-space:nowrap;left:562.00px;transform:scaleX(0.9452);transform-origin:0 0;">Other</div>
<div style="position:absolute;top:393.00px;font-size:12.40px;line-height:12.40px;color:#1e1e1e;white-space:nowrap;left:611.70px;transform:scaleX(0.9204);transform-origin:0 0;">0.8%</div>
<div style="position:absolute;top:357.00px;font-size:12.40px;line-height:12.40px;color:#767676;white-space:nowrap;left:702.80px;transform:scaleX(0.9472);transform-origin:0 0;">IO Wait</div>
<div style="position:absolute;top:357.00px;font-size:12.40px;line-height:12.40px;color:#1e1e1e;white-space:nowrap;left:751.20px;transform:scaleX(0.9062);transform-origin:0 0;">0.0%</div>
<div class="panel" style="left:878px;top:131px;width:618px;height:294px;"><div class="phs" style="top:38px"></div></div>
<div style="position:absolute;top:143.00px;font-size:14.30px;line-height:14.30px;color:#4b5166;white-space:nowrap;left:898.30px;transform:scaleX(0.9852);transform-origin:0 0;-webkit-text-stroke:0.450px #4b5166;">Memory Usage</div>
<div style="position:absolute;top:186.00px;font-size:12.40px;line-height:12.40px;color:#767676;white-space:nowrap;left:905.50px;transform:scaleX(0.9242);transform-origin:0 0;">100%</div>
<svg class="abs" style="left:904.7px;top:196.0px;overflow:visible" width="570" height="140" viewBox="0 0 570 140"><g transform="translate(4,4)"><path d="M0,0.50 L557.5,0.50" stroke="#d4d4d4" stroke-width="1" stroke-dasharray="2,3.200" fill="none"/><path d="M0,13.07 L557.5,13.07" stroke="#d4d4d4" stroke-width="1" stroke-dasharray="2,3.200" fill="none"/><path d="M0,25.64 L557.5,25.64" stroke="#d4d4d4" stroke-width="1" stroke-dasharray="2,3.200" fill="none"/><path d="M0,38.21 L557.5,38.21" stroke="#d4d4d4" stroke-width="1" stroke-dasharray="2,3.200" fill="none"/><path d="M0,50.78 L557.5,50.78" stroke="#d4d4d4" stroke-width="1" stroke-dasharray="2,3.200" fill="none"/><path d="M0,63.35 L557.5,63.35" stroke="#d4d4d4" stroke-width="1" stroke-dasharray="2,3.200" fill="none"/><path d="M0,75.92 L557.5,75.92" stroke="#d4d4d4" stroke-width="1" stroke-dasharray="2,3.200" fill="none"/><path d="M0,88.49 L557.5,88.49" stroke="#d4d4d4" stroke-width="1" stroke-dasharray="2,3.200" fill="none"/><path d="M0,101.06 L557.5,101.06" stroke="#d4d4d4" stroke-width="1" stroke-dasharray="2,3.200" fill="none"/><path d="M0,113.63 L557.5,113.63" stroke="#d4d4d4" stroke-width="1" stroke-dasharray="2,3.200" fill="none"/><path d="M557.5,0 L557.5,125.7" stroke="#d4d4d4" stroke-width="1" stroke-dasharray="2,3.200" fill="none"/><path d="M0.500,0 L0.500,125.9 L557.5,125.9" stroke="#cfcfcf" stroke-width="1" fill="none"/><rect x="552" y="25.600" width="5" height="1.700" fill="#7cc417"/><rect x="552" y="110.300" width="5" height="1.600" fill="#f0d818"/><rect x="552" y="111.800" width="5" height="1.800" fill="#f5911e"/><rect x="552" y="123.800" width="5" height="1.600" fill="#f23df0"/></g></svg>
<div style="position:absolute;top:328.00px;font-size:12.40px;line-height:12.40px;color:#767676;white-space:nowrap;left:909.20px;transform:scaleX(0.9926);transform-origin:0 0;">10min</div>
<div class="abs" style="left:1280.7px;top:334.7px;width:5.2px;height:5.2px;border-radius:50%;background:#f5911e"></div>
<div style="position:absolute;top:331.00px;font-size:12.40px;line-height:12.40px;color:#444;white-space:nowrap;left:1288.80px;transform:scaleX(0.9400);transform-origin:0 0;">Used</div>
<div class="abs" style="left:1322.7px;top:334.7px;width:5.2px;height:5.2px;border-radius:50%;background:#f23df0"></div>
<div style="position:absolute;top:331.00px;font-size:12.40px;line-height:12.40px;color:#444;white-space:nowrap;left:1330.80px;transform:scaleX(1.0108);transform-origin:0 0;">Buffer</div>
<div class="abs" style="left:1370.7px;top:334.7px;width:5.2px;height:5.2px;border-radius:50%;background:#f0d818"></div>
<div style="position:absolute;top:331.00px;font-size:12.40px;line-height:12.40px;color:#444;white-space:nowrap;left:1378.80px;transform:scaleX(0.9462);transform-origin:0 0;">Cache</div>
<div class="abs" style="left:1418.7px;top:334.7px;width:5.2px;height:5.2px;border-radius:50%;background:#80c41c"></div>
<div style="position:absolute;top:331.00px;font-size:12.40px;line-height:12.40px;color:#444;white-space:nowrap;left:1427.20px;transform:scaleX(0.9339);transform-origin:0 0;">Free</div>
<div style="position:absolute;top:329.00px;font-size:11.00px;line-height:11.00px;color:#666;white-space:nowrap;left:1457.00px;transform:scaleX(1.0939);transform-origin:0 0;">0</div>
<svg class="abs" style="left:903px;top:349px" width="60" height="60" viewBox="0 0 60 60"><path d="M28.80,9.10 A20.90,20.90 0 0 1 40.79,12.88" fill="none" stroke="#f5911e" stroke-width="3.700"/><path d="M40.79,12.88 A20.90,20.90 0 0 1 41.38,13.31" fill="none" stroke="#f23df0" stroke-width="3.700"/><path d="M41.38,13.31 A20.90,20.90 0 0 1 49.24,25.65" fill="none" stroke="#ecd71c" stroke-width="3.700"/><path d="M49.24,25.65 A20.90,20.90 0 1 1 28.80,9.10" fill="none" stroke="#7cc417" stroke-width="3.700"/></svg>
<div style="position:absolute;top:374.00px;font-size:9.80px;line-height:9.80px;color:#333;white-space:nowrap;left:921.70px;transform:scaleX(0.8996);transform-origin:0 0;">9.7%</div>
<div style="position:absolute;top:357.00px;font-size:12.40px;line-height:12.40px;color:#767676;white-space:nowrap;left:966.20px;">Utilization</div>
<div style="position:absolute;top:377.00px;font-size:23.00px;line-height:23.00px;color:#111;white-space:nowrap;left:966.70px;transform:scaleX(0.9494);transform-origin:0 0;">744.86</div>
<div style="position:absolute;top:385.00px;font-size:13.60px;line-height:13.60px;color:#111;white-space:nowrap;left:1038.80px;transform:scaleX(1.0299);transform-origin:0 0;">MB</div>
<div style="position:absolute;top:377.00px;font-size:23.00px;line-height:23.00px;color:#111;white-space:nowrap;left:1065.50px;transform:scaleX(1.1500);transform-origin:0 0;">/</div>
<div style="position:absolute;top:377.00px;font-size:23.00px;line-height:23.00px;color:#111;white-space:nowrap;left:1080.00px;transform:scaleX(0.9449);transform-origin:0 0;">7.52</div>
<div style="position:absolute;top:385.00px;font-size:13.60px;line-height:13.60px;color:#111;white-space:nowrap;left:1128.00px;transform:scaleX(0.9012);transform-origin:0 0;">GB</div>
<svg class="abs" style="left:1149.8px;top:381.2px" width="18" height="18" viewBox="0 0 18 18"><circle cx="9" cy="9" r="8" fill="#1e9af0"/><circle cx="9" cy="5" r="1.400" fill="#fff"/><rect x="7.800" y="7.500" width="2.400" height="6.500" fill="#fff"/></svg>
<div style="position:absolute;top:357.00px;font-size:12.40px;line-height:12.40px;color:#767676;white-space:nowrap;left:1269.20px;transform:scaleX(1.0200);transform-origin:0 0;">Buffer</div>
<div style="position:absolute;top:357.00px;font-size:12.40px;line-height:12.40px;color:#1e1e1e;white-space:nowrap;left:1394.20px;transform:scaleX(0.9671);transform-origin:0 0;">23.95 MB</div>
<div style="position:absolute;top:375.00px;font-size:12.40px;line-height:12.40px;color:#767676;white-space:nowrap;left:1269.20px;transform:scaleX(0.9573);transform-origin:0 0;">Cache</div>
<div style="position:absolute;top:375.00px;font-size:12.40px;line-height:12.40px;color:#1e1e1e;white-space:nowrap;left:1394.20px;transform:scaleX(0.9693);transform-origin:0 0;">873.54 MB</div>
<div style="position:absolute;top:393.00px;font-size:12.40px;line-height:12.40px;color:#767676;white-space:nowrap;left:1269.20px;transform:scaleX(0.9339);transform-origin:0 0;">Free</div>
<div style="position:absolute;top:393.00px;font-size:12.40px;line-height:12.40px;color:#1e1e1e;white-space:nowrap;left:1394.20px;transform:scaleX(0.9303);transform-origin:0 0;">5.92 GB</div>
<div class="panel" style="left:250px;top:435px;width:618px;height:294px;"><div class="phs" style="top:38px"></div></div>
<div style="position:absolute;top:447.00px;font-size:14.30px;line-height:14.30px;color:#4b5166;white-space:nowrap;left:270.00px;transform:scaleX(0.9861);transform-origin:0 0;-webkit-text-stroke:0.450px #4b5166;">Total Physical Network Usage</div>
<div style="position:absolute;top:490.00px;font-size:12.40px;line-height:12.40px;color:#767676;white-space:nowrap;left:277.00px;transform:scaleX(0.9781);transform-origin:0 0;">245.8 KB/s</div>
<svg class="abs" style="left:276.0px;top:500.3px;overflow:visible" width="570" height="140" viewBox="0 0 570 140"><g transform="translate(4,4)"><path d="M0,0.50 L557.5,0.50" stroke="#d4d4d4" stroke-width="1" stroke-dasharray="2,3.200" fill="none"/><path d="M0,13.07 L557.5,13.07" stroke="#d4d4d4" stroke-width="1" stroke-dasharray="2,3.200" fill="none"/><path d="M0,25.64 L557.5,25.64" stroke="#d4d4d4" stroke-width="1" stroke-dasharray="2,3.200" fill="none"/><path d="M0,38.21 L557.5,38.21" stroke="#d4d4d4" stroke-width="1" stroke-dasharray="2,3.200" fill="none"/><path d="M0,50.78 L557.5,50.78" stroke="#d4d4d4" stroke-width="1" stroke-dasharray="2,3.200" fill="none"/><path d="M0,63.35 L557.5,63.35" stroke="#d4d4d4" stroke-width="1" stroke-dasharray="2,3.200" fill="none"/><path d="M0,75.92 L557.5,75.92" stroke="#d4d4d4" stroke-width="1" stroke-dasharray="2,3.200" fill="none"/><path d="M0,88.49 L557.5,88.49" stroke="#d4d4d4" stroke-width="1" stroke-dasharray="2,3.200" fill="none"/><path d="M0,101.06 L557.5,101.06" stroke="#d4d4d4" stroke-width="1" stroke-dasharray="2,3.200" fill="none"/><path d="M0,113.63 L557.5,113.63" stroke="#d4d4d4" stroke-width="1" stroke-dasharray="2,3.200" fill="none"/><path d="M557.5,0 L557.5,125.7" stroke="#d4d4d4" stroke-width="1" stroke-dasharray="2,3.200" fill="none"/><path d="M0.500,0 L0.500,125.9 L557.5,125.9" stroke="#cfcfcf" stroke-width="1" fill="none"/><path d="M192.2,118.0 L198.8,122.8 L203.0,124.3 L247.8,124.3 L252.6,118.7 L261.3,123.5 L275.9,123.9 L280.5,122.8 L285.3,124.3 L303.0,124.3 L308.2,122.8 L313.4,123.9 L332.2,123.9 L337.4,122.8 L342.6,123.9 L359.2,123.9 L364.5,122.8 L373.8,123.9 L379.0,121.8 L383.2,124.3 L402.0,124.3 L407.2,118.7 L413.4,123.9 L435.3,123.9 L440.1,122.4 L444.7,123.0 L448.8,122.2 L462.4,121.0 L469.7,122.8 L477.4,123.0 L482.2,124.3 L532.2,124.3 L538.4,121.4 L542.6,124.3 L547.8,122.6 L557.2,124.3 L557.2,125.7 L192.2,125.7 Z" fill="#7cc417" fill-opacity="0.250" stroke="none"/><path d="M192.2,89.5 L195.5,105.1 L198.8,117.6 L203.0,122.2 L219.7,122.8 L225.9,121.2 L232.2,122.8 L247.8,122.2 L250.3,78.0 L252.6,37.4 L254.9,78.0 L257.2,115.5 L261.3,120.7 L275.9,121.8 L280.5,119.3 L285.3,121.8 L303.0,121.8 L308.2,119.3 L313.4,121.4 L332.2,121.4 L337.4,119.3 L342.6,121.8 L359.2,121.4 L364.5,119.3 L373.8,121.0 L379.0,117.6 L383.2,122.2 L390.5,120.7 L400.9,122.2 L404.2,88.5 L407.2,20.7 L409.7,78.0 L412.4,117.6 L416.5,121.8 L420.7,120.3 L425.9,122.8 L435.3,122.2 L440.1,102.0 L444.7,114.5 L448.8,112.4 L453.0,113.5 L458.2,101.0 L462.4,97.2 L465.5,103.0 L469.7,118.7 L473.8,121.8 L477.4,119.3 L482.2,122.2 L498.8,122.8 L504.0,121.4 L509.2,122.8 L532.2,122.2 L538.4,111.4 L542.6,115.5 L547.8,95.1 L553.0,103.0 L557.2,109.3" fill="none" stroke="#1e8ff0" stroke-width="1.900" stroke-dasharray="1.900,2.300"/><path d="M192.2,118.0 L198.8,122.8 L203.0,124.3 L247.8,124.3 L252.6,118.7 L261.3,123.5 L275.9,123.9 L280.5,122.8 L285.3,124.3 L303.0,124.3 L308.2,122.8 L313.4,123.9 L332.2,123.9 L337.4,122.8 L342.6,123.9 L359.2,123.9 L364.5,122.8 L373.8,123.9 L379.0,121.8 L383.2,124.3 L402.0,124.3 L407.2,118.7 L413.4,123.9 L435.3,123.9 L440.1,122.4 L444.7,123.0 L448.8,122.2 L462.4,121.0 L469.7,122.8 L477.4,123.0 L482.2,124.3 L532.2,124.3 L538.4,121.4 L542.6,124.3 L547.8,122.6 L557.2,124.3" fill="none" stroke="#7cc417" stroke-width="1.800" stroke-linejoin="round"/></g></svg>
<div style="position:absolute;top:632.00px;font-size:12.40px;line-height:12.40px;color:#767676;white-space:nowrap;left:280.00px;">10min</div>
<div class="abs" style="left:718.8px;top:637.1px;width:8.8px;height:8.8px;border-radius:50%;background:#7cc417"></div>
<div style="position:absolute;top:635.00px;font-size:12.40px;line-height:12.40px;color:#444;white-space:nowrap;left:730.80px;transform:scaleX(0.9273);transform-origin:0 0;">Received</div>
<svg class="abs" style="left:784.3px;top:635.5px" width="12" height="12" viewBox="0 0 12 12"><circle cx="6" cy="6" r="4.200" fill="none" stroke="#1e8ff0" stroke-width="1.500" stroke-dasharray="2.200,2.200"/></svg>
<div style="position:absolute;top:635.00px;font-size:12.40px;line-height:12.40px;color:#444;white-space:nowrap;left:798.10px;transform:scaleX(0.9373);transform-origin:0 0;">Sent</div>
<div style="position:absolute;top:633.00px;font-size:11.00px;line-height:11.00px;color:#666;white-space:nowrap;left:828.30px;transform:scaleX(1.0939);transform-origin:0 0;">0</div>
<div class="abs" style="left:280.2px;top:660.2px;width:3px;height:47.600px;background:#7cc417"></div>
<div style="position:absolute;top:661.00px;font-size:12.40px;line-height:12.40px;color:#767676;white-space:nowrap;left:292.80px;transform:scaleX(0.9331);transform-origin:0 0;">Received</div>
<div style="position:absolute;top:682.00px;font-size:22.30px;line-height:22.30px;color:#111;white-space:nowrap;left:293.30px;transform:scaleX(0.9645);transform-origin:0 0;">2.4</div>
<div style="position:absolute;top:689.00px;font-size:13.60px;line-height:13.60px;color:#111;white-space:nowrap;left:328.80px;transform:scaleX(1.0620);transform-origin:0 0;">KB/s</div>
<svg class="abs" style="left:474.7px;top:660.2px" width="4" height="50" viewBox="0 0 4 50"><circle cx="2" cy="2.8" r="1.450" fill="#1e8ff0"/><circle cx="2" cy="8.8" r="1.450" fill="#1e8ff0"/><circle cx="2" cy="14.9" r="1.450" fill="#1e8ff0"/><circle cx="2" cy="20.9" r="1.450" fill="#1e8ff0"/><circle cx="2" cy="27.0" r="1.450" fill="#1e8ff0"/><circle cx="2" cy="33.0" r="1.450" fill="#1e8ff0"/><circle cx="2" cy="39.1" r="1.450" fill="#1e8ff0"/><circle cx="2" cy="45.1" r="1.450" fill="#1e8ff0"/></svg>
<div style="position:absolute;top:661.00px;font-size:12.40px;line-height:12.40px;color:#767676;white-space:nowrap;left:487.80px;transform:scaleX(0.9569);transform-origin:0 0;">Sent</div>
<div style="position:absolute;top:682.00px;font-size:22.30px;line-height:22.30px;color:#111;white-space:nowrap;left:488.30px;transform:scaleX(0.9722);transform-origin:0 0;">30.4</div>
<div style="position:absolute;top:689.00px;font-size:13.60px;line-height:13.60px;color:#111;white-space:nowrap;left:535.80px;transform:scaleX(1.0690);transform-origin:0 0;">KB/s</div>
<div class="panel" style="left:878px;top:435px;width:618px;height:294px;"></div>
<div style="position:absolute;top:447.00px;font-size:14.30px;line-height:14.30px;color:#4b5166;white-space:nowrap;left:898.30px;transform:scaleX(0.9888);transform-origin:0 0;">Processes</div>
<div class="abs" style="left:879px;top:474px;width:616px;height:254px;overflow:hidden;background:#efefef">
<div class="abs" style="left:0;top:0;width:616px;height:29px;background:#7f889b"></div>
<div class="abs" style="left:254.800px;top:1px;width:2px;height:28px;background:#a4abba"></div><div class="abs" style="left:407.800px;top:1px;width:2px;height:28px;background:#a4abba"></div>
<div style="position:absolute;top:9.00px;font-size:11.60px;line-height:11.60px;color:#fff;white-space:nowrap;left:13.00px;transform:scaleX(0.9575);transform-origin:0 0;-webkit-text-stroke:0.400px #fff;">Process Name</div>
<div style="position:absolute;top:9.00px;font-size:11.60px;line-height:11.60px;color:#fff;white-space:nowrap;left:336.30px;transform:scaleX(0.9099);transform-origin:0 0;-webkit-text-stroke:0.400px #fff;">CPU Usage</div>
<div style="position:absolute;top:9.00px;font-size:11.60px;line-height:11.60px;color:#fff;white-space:nowrap;left:560.20px;transform:scaleX(0.9696);transform-origin:0 0;-webkit-text-stroke:0.400px #fff;">Memory</div>
<svg class="abs" style="left:240px;top:15px" width="6" height="4" viewBox="0 0 6 4"><path d="M0.300,0.300 L5.200,0.300 L2.750,3.300 Z" fill="#fff"/></svg>
<div class="abs" style="left:0;top:58.30px;width:616px;height:1px;background:#c6c6c6"></div>
<div class="abs" style="left:0;top:59.30px;width:616px;height:1px;background:#fbfbfb"></div>
<svg class="abs" style="left:12.8px;top:37.3px" width="14" height="14" viewBox="0 0 14 14"><rect width="14" height="14" rx="2.200" fill="#a6a6a6"/><circle cx="8.900" cy="5.300" r="2.300" fill="none" stroke="#fff" stroke-width="1.500"/><circle cx="8.900" cy="5.300" r="3.500" fill="none" stroke="#fff" stroke-width="1.300" stroke-dasharray="1.370,1.370"/><circle cx="4.500" cy="9.700" r="1.500" fill="none" stroke="#fff" stroke-width="1.200"/><circle cx="4.500" cy="9.700" r="2.500" fill="none" stroke="#fff" stroke-width="1.100" stroke-dasharray="1.120,1.120"/></svg>
<div style="position:absolute;top:38.00px;font-size:12.10px;line-height:12.10px;color:#444;white-space:nowrap;left:30.20px;transform:scaleX(0.9425);transform-origin:0 0;">cloudinstall (2)</div>
<div style="position:absolute;top:38.00px;font-size:12.10px;line-height:12.10px;color:#444;white-space:nowrap;left:377.20px;transform:scaleX(0.8300);transform-origin:0 0;">0 %</div>
<div style="position:absolute;top:38.00px;font-size:12.10px;line-height:12.10px;color:#444;white-space:nowrap;left:548.80px;transform:scaleX(0.9106);transform-origin:0 0;">3.8 MB</div>
<svg class="abs" style="left:594.500px;top:41.30px" width="11" height="7" viewBox="0 0 11 7"><path d="M1,1 L5.500,5.600 L10,1" fill="none" stroke="#333" stroke-width="1.300"/></svg>
<div class="abs" style="left:0;top:88.30px;width:616px;height:1px;background:#c6c6c6"></div>
<div class="abs" style="left:0;top:89.30px;width:616px;height:1px;background:#fbfbfb"></div>
<svg class="abs" style="left:12.8px;top:67.3px" width="14" height="14" viewBox="0 0 14 14"><circle cx="7" cy="7" r="6.300" fill="#2f9be8"/><circle cx="7" cy="7" r="6.300" fill="none" stroke="#7fd0fa" stroke-width="1"/><path d="M4,3 C6,2.500 7,4 6,5.500 C5,7 4,7.500 4.500,9.500 C5,11 6.500,11.500 7,12.500 C4,12 2,10 2,7 C2,5 3,3.500 4,3 Z" fill="#c9ecff"/><path d="M9,5 C10.500,5 11.500,6.500 11,8 C10.500,9 9.500,9 9,8 C8.500,7 8.500,5.500 9,5 Z" fill="#c9ecff"/></svg>
<div style="position:absolute;top:68.00px;font-size:12.10px;line-height:12.10px;color:#444;white-space:nowrap;left:30.20px;transform:scaleX(0.8841);transform-origin:0 0;">Web Server (1)</div>
<div style="position:absolute;top:68.00px;font-size:12.10px;line-height:12.10px;color:#444;white-space:nowrap;left:377.20px;transform:scaleX(0.8300);transform-origin:0 0;">0 %</div>
<div style="position:absolute;top:68.00px;font-size:12.10px;line-height:12.10px;color:#444;white-space:nowrap;left:548.80px;transform:scaleX(0.9106);transform-origin:0 0;">5.4 MB</div>
<svg class="abs" style="left:594.500px;top:71.30px" width="11" height="7" viewBox="0 0 11 7"><path d="M1,1 L5.500,5.600 L10,1" fill="none" stroke="#333" stroke-width="1.300"/></svg>
<div class="abs" style="left:0;top:118.30px;width:616px;height:1px;background:#c6c6c6"></div>
<div class="abs" style="left:0;top:119.30px;width:616px;height:1px;background:#fbfbfb"></div>
<svg class="abs" style="left:12.8px;top:97.3px" width="14" height="14" viewBox="0 0 14 14"><rect width="14" height="14" rx="2.200" fill="#a6a6a6"/><circle cx="8.900" cy="5.300" r="2.300" fill="none" stroke="#fff" stroke-width="1.500"/><circle cx="8.900" cy="5.300" r="3.500" fill="none" stroke="#fff" stroke-width="1.300" stroke-dasharray="1.370,1.370"/><circle cx="4.500" cy="9.700" r="1.500" fill="none" stroke="#fff" stroke-width="1.200"/><circle cx="4.500" cy="9.700" r="2.500" fill="none" stroke="#fff" stroke-width="1.100" stroke-dasharray="1.120,1.120"/></svg>
<div style="position:absolute;top:98.00px;font-size:12.10px;line-height:12.10px;color:#444;white-space:nowrap;left:30.20px;transform:scaleX(0.9079);transform-origin:0 0;">System Processes (86)</div>
<div style="position:absolute;top:98.00px;font-size:12.10px;line-height:12.10px;color:#444;white-space:nowrap;left:362.30px;transform:scaleX(0.8551);transform-origin:0 0;">1.16 %</div>
<div style="position:absolute;top:98.00px;font-size:12.10px;line-height:12.10px;color:#444;white-space:nowrap;left:536.80px;transform:scaleX(0.9060);transform-origin:0 0;">657.2 MB</div>
<svg class="abs" style="left:594.500px;top:101.30px" width="11" height="7" viewBox="0 0 11 7"><path d="M1,1 L5.500,5.600 L10,1" fill="none" stroke="#333" stroke-width="1.300"/></svg>
<div class="abs" style="left:0;top:148.30px;width:616px;height:1px;background:#c6c6c6"></div>
<div class="abs" style="left:0;top:149.30px;width:616px;height:1px;background:#fbfbfb"></div>
<svg class="abs" style="left:12.8px;top:127.3px" width="14" height="14" viewBox="0 0 14 14"><path d="M1.500,5 L7,1.500 L12.500,5 L12.500,12.500 L1.500,12.500 Z" fill="#f9a825"/><path d="M3,3 L11,3 L11,8 L7,10 L3,8 Z" fill="#fff3c4"/><path d="M1.500,5.500 L7,9 L12.500,5.500 L12.500,12.500 L1.500,12.500 Z" fill="#fbb034"/></svg>
<div style="position:absolute;top:128.00px;font-size:12.10px;line-height:12.10px;color:#444;white-space:nowrap;left:30.20px;transform:scaleX(0.8884);transform-origin:0 0;">Syslog Server (1)</div>
<div style="position:absolute;top:128.00px;font-size:12.10px;line-height:12.10px;color:#444;white-space:nowrap;left:377.20px;transform:scaleX(0.8300);transform-origin:0 0;">0 %</div>
<div style="position:absolute;top:128.00px;font-size:12.10px;line-height:12.10px;color:#444;white-space:nowrap;left:548.80px;transform:scaleX(0.9106);transform-origin:0 0;">2.9 MB</div>
<svg class="abs" style="left:594.500px;top:131.30px" width="11" height="7" viewBox="0 0 11 7"><path d="M1,1 L5.500,5.600 L10,1" fill="none" stroke="#333" stroke-width="1.300"/></svg>
<div class="abs" style="left:0;top:178.30px;width:616px;height:1px;background:#c6c6c6"></div>
<div class="abs" style="left:0;top:179.30px;width:616px;height:1px;background:#fbfbfb"></div>
<svg class="abs" style="left:12.8px;top:157.3px" width="14" height="14" viewBox="0 0 14 14"><rect width="14" height="14" rx="3" fill="#1648b0"/><rect x="2.500" y="2.500" width="9" height="8" rx="1" fill="#bfe3fb"/><rect x="2.500" y="8" width="9" height="3.500" fill="#3aa0ee"/><rect x="4" y="4" width="6" height="1" fill="#5a8bd0"/></svg>
<div style="position:absolute;top:158.00px;font-size:12.10px;line-height:12.10px;color:#444;white-space:nowrap;left:30.20px;transform:scaleX(0.8882);transform-origin:0 0;">QuLog Center (4)</div>
<div style="position:absolute;top:158.00px;font-size:12.10px;line-height:12.10px;color:#444;white-space:nowrap;left:377.20px;transform:scaleX(0.8300);transform-origin:0 0;">0 %</div>
<div style="position:absolute;top:158.00px;font-size:12.10px;line-height:12.10px;color:#444;white-space:nowrap;left:542.80px;transform:scaleX(0.9079);transform-origin:0 0;">58.5 MB</div>
<svg class="abs" style="left:594.500px;top:161.30px" width="11" height="7" viewBox="0 0 11 7"><path d="M1,1 L5.500,5.600 L10,1" fill="none" stroke="#333" stroke-width="1.300"/></svg>
<div class="abs" style="left:0;top:208.30px;width:616px;height:1px;background:#c6c6c6"></div>
<div class="abs" style="left:0;top:209.30px;width:616px;height:1px;background:#fbfbfb"></div>
<svg class="abs" style="left:12.8px;top:187.3px" width="14" height="14" viewBox="0 0 14 14"><rect width="14" height="14" rx="3" fill="#4a5a8a"/><path d="M7,2.500 C9.500,2.500 10,5 10,7 L11.500,10 L2.500,10 L4,7 C4,5 4.500,2.500 7,2.500 Z" fill="#f9a825"/><circle cx="7" cy="11.200" r="1.300" fill="#f9a825"/><path d="M8,3 L11,6" stroke="#fff" stroke-width="1.200"/></svg>
<div style="position:absolute;top:188.00px;font-size:12.10px;line-height:12.10px;color:#444;white-space:nowrap;left:30.20px;transform:scaleX(0.9233);transform-origin:0 0;">Notification Center (4)</div>
<div style="position:absolute;top:188.00px;font-size:12.10px;line-height:12.10px;color:#444;white-space:nowrap;left:377.20px;transform:scaleX(0.8300);transform-origin:0 0;">0 %</div>
<div style="position:absolute;top:188.00px;font-size:12.10px;line-height:12.10px;color:#444;white-space:nowrap;left:542.80px;transform:scaleX(0.9079);transform-origin:0 0;">52.7 MB</div>
<svg class="abs" style="left:594.500px;top:191.30px" width="11" height="7" viewBox="0 0 11 7"><path d="M1,1 L5.500,5.600 L10,1" fill="none" stroke="#333" stroke-width="1.300"/></svg>
<div class="abs" style="left:0;top:238.30px;width:616px;height:1px;background:#c6c6c6"></div>
<div class="abs" style="left:0;top:239.30px;width:616px;height:1px;background:#fbfbfb"></div>
<svg class="abs" style="left:12.8px;top:217.3px" width="14" height="14" viewBox="0 0 14 14"><rect width="14" height="14" rx="3" fill="#f8f8f8"/><path d="M2,4 L6,7.500 L2.500,10.500 M6,7.500 L10.500,9.500 M6,7.500 L10,3.500" stroke="#2f7be0" stroke-width="1.300" fill="none"/><circle cx="10.800" cy="9.800" r="1.700" fill="#2f5fd0"/></svg>
<div style="position:absolute;top:218.00px;font-size:12.10px;line-height:12.10px;color:#444;white-space:nowrap;left:30.20px;transform:scaleX(0.9153);transform-origin:0 0;">Network &amp; Virtual Switch (3)</div>
<div style="position:absolute;top:218.00px;font-size:12.10px;line-height:12.10px;color:#444;white-space:nowrap;left:377.20px;transform:scaleX(0.8300);transform-origin:0 0;">0 %</div>
<div style="position:absolute;top:218.00px;font-size:12.10px;line-height:12.10px;color:#444;white-space:nowrap;left:536.80px;transform:scaleX(0.9060);transform-origin:0 0;">104.5 MB</div>
<svg class="abs" style="left:594.500px;top:221.30px" width="11" height="7" viewBox="0 0 11 7"><path d="M1,1 L5.500,5.600 L10,1" fill="none" stroke="#333" stroke-width="1.300"/></svg>
<div class="abs" style="left:0;top:268.30px;width:616px;height:1px;background:#c6c6c6"></div>
<div class="abs" style="left:0;top:269.30px;width:616px;height:1px;background:#fbfbfb"></div>
<svg class="abs" style="left:12.8px;top:247.3px" width="14" height="14" viewBox="0 0 14 14"><path d="M7,1 L12,13 L2,13 Z" fill="none" stroke="#f5a623" stroke-width="1.500"/></svg>
<div style="position:absolute;top:248.00px;font-size:12.10px;line-height:12.10px;color:#444;white-space:nowrap;left:30.20px;transform:scaleX(0.9224);transform-origin:0 0;">Microsoft Networking (SMB) (10)</div>
<div style="position:absolute;top:248.00px;font-size:12.10px;line-height:12.10px;color:#444;white-space:nowrap;left:362.30px;transform:scaleX(0.8551);transform-origin:0 0;">0.52 %</div>
<div style="position:absolute;top:248.00px;font-size:12.10px;line-height:12.10px;color:#444;white-space:nowrap;left:536.80px;transform:scaleX(0.9219);transform-origin:0 0;">114.9 MB</div>
<svg class="abs" style="left:594.500px;top:251.30px" width="11" height="7" viewBox="0 0 11 7"><path d="M1,1 L5.500,5.600 L10,1" fill="none" stroke="#333" stroke-width="1.300"/></svg>
</div>
</div><svg class="abs" style="left:1884px;top:536px" width="26" height="48" viewBox="0 0 26 48"><path d="M3,3 L23,24 L3,45" fill="none" stroke="#fff" stroke-opacity="0.350" stroke-width="1.600"/></svg>
<div class="abs" style="left:915.5px;top:998.700px;width:9px;height:9px;border-radius:50%;background:rgba(255,255,255,1)"></div>
<div class="abs" style="left:956.7px;top:998.700px;width:9px;height:9px;border-radius:50%;background:rgba(255,255,255,0.38)"></div>
<div class="abs" style="left:998.0px;top:998.700px;width:9px;height:9px;border-radius:50%;background:rgba(255,255,255,0.38)"></div>
<svg class="abs" style="left:900px;top:1024px" width="122" height="38" viewBox="900 1024 122 38" fill="none" stroke="#fff" stroke-opacity="0.900">
<circle cx="922" cy="1042.500" r="13" stroke-width="1.500"/><circle cx="959.500" cy="1042.500" r="13" stroke-width="1.500"/><circle cx="999.200" cy="1042.500" r="13" stroke-width="1.500"/>
<path d="M919.500,1048 L917.500,1048 A3.600,3.600 0 0 1 916.600,1041 A5,5 0 0 1 926.200,1039.600 A4.300,4.300 0 0 1 928,1048 L923.500,1048 A3.300,3.300 0 1 1 926.200,1043" stroke-width="1.700"/>
<path d="M952.500,1040.500 L958.500,1034.500 L961.500,1037.500 L955.500,1043.500 Z M958.200,1040.800 L966,1048.600 L964,1050.600 L956.200,1042.800" stroke-width="1.600"/>
<path d="M992.500,1035.500 L999.200,1036.500 L1005.900,1035.500 L1005.900,1048 L999.200,1049 L992.500,1048 Z M999.200,1036.500 L999.200,1049" stroke-width="1.900"/>
</svg>
<svg class="abs" style="left:30px;top:908px" width="72" height="84" viewBox="30 908 72 84" fill="none" stroke="#fff" stroke-width="2.300" stroke-linejoin="round">
<path d="M36,922.300 L96,922.300"/><path d="M53.500,922 L53.500,918.500 Q53.500,914.500 57.500,914.500 L71.500,914.500 Q75.500,914.500 75.500,918.500 L75.500,922"/>
<path d="M41.300,927.500 L91,927.500 L88.300,983 Q88.100,986.400 84.700,986.400 L47.600,986.400 Q44.200,986.400 44,983 Z"/></svg>
<div style="position:absolute;top:1018.00px;font-size:43.00px;line-height:43.00px;color:rgba(255,255,255,0.450);white-space:nowrap;font-weight:bold;left:40.00px;transform:scaleX(0.8484);transform-origin:0 0;text-shadow:0 1px 2px rgba(30,30,90,0.250);">QTS</div>
<div style="position:absolute;top:970.00px;font-size:54.60px;line-height:54.60px;color:#fff;white-space:nowrap;left:1763.80px;transform:scaleX(0.8973);transform-origin:0 0;-webkit-text-stroke:1.500px #5862c8;">16:20</div>
<div style="position:absolute;top:1034.00px;font-size:18.30px;line-height:18.30px;color:#fff;white-space:nowrap;left:1673.00px;transform:scaleX(1.1095);transform-origin:0 0;text-shadow:0 1px 2px rgba(20,20,80,0.550);">2026/02/18 Wednesday</div></body>
</html>
